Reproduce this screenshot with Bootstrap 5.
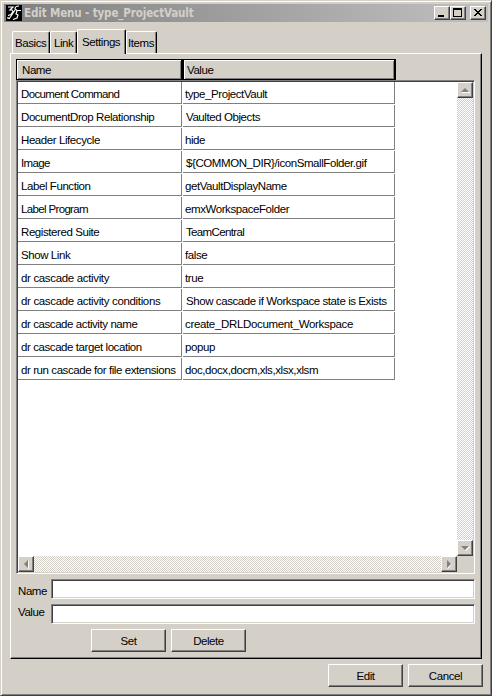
<!DOCTYPE html>
<html lang="en">
<head>
<meta charset="utf-8">
<title>Edit Menu</title>
<link href="https://cdn.jsdelivr.net/npm/bootstrap@5.3.0/dist/css/bootstrap.min.css" rel="stylesheet">
<style>
:root{--face:#d4d0c8;--mid:#808080;--dark:#404040}
body{margin:0;width:492px;height:696px;overflow:hidden;background:var(--face);font:11.5px/14px "Liberation Sans",Arial,sans-serif;color:#000}
.win{width:492px;height:696px;padding:3px 2px 0 2px;border:1px solid;border-color:var(--face) var(--dark) var(--dark) var(--face);box-shadow:inset 1px 1px #fff,inset -1px -1px var(--mid);background:var(--face)}
.titlebar{height:18px;margin-left:1px;margin-right:1px;padding:0 2px;background:linear-gradient(90deg,#808080,#c0c0c0)}
.caption-text{font:bold 11.5px/18px "DejaVu Sans Condensed","DejaVu Sans",sans-serif;font-stretch:condensed;color:var(--face);margin-left:2px;white-space:pre;letter-spacing:-.12px}
.face{background:var(--face);border:1px solid;border-color:#fff var(--dark) var(--dark) #fff;box-shadow:inset -1px -1px var(--mid);border-radius:0;padding:0;color:#000}
.cap{width:16px;height:14px}
.cap svg,.sb svg,.logo{display:block}
.tabs{height:25px;margin:6px 0 0 9px}
.tab{height:22px;border:1px solid;border-color:#fff #000 transparent #fff;border-bottom:0;border-radius:2px 2px 0 0;box-shadow:inset -1px 0 var(--mid);padding-top:4px;white-space:nowrap}
.tab.on{height:25px;padding-top:5px;background:var(--face);margin-bottom:-1px;z-index:1;position:relative}
.panel{margin:0 0 0 7px;width:472px;height:606px;border:1px solid;border-color:#fff #000 #000 #fff;box-shadow:inset -1px -1px var(--mid);padding:5px 0 0 5px}
.heads{height:21px}
.head{height:21px;border:1px solid #000;border-right-width:2px;box-shadow:inset 1px 1px #fff,inset -1px -1px var(--mid);padding:3px 0 0 4px}
.h1c{width:167px;padding-left:5px}.h2c{width:213px;padding-left:3px}
.list{width:459px;height:494px;border:1px solid;border-color:var(--mid) #fff #fff var(--mid);box-shadow:inset 1px 1px var(--dark),inset -1px -1px var(--face);background:#fff;padding:1px}
.rows{width:439px;height:475px;margin-top:-1px}
.line{height:23px}
.cell{height:22px;margin-top:1px;border-right:1px solid var(--mid);border-bottom:1px solid var(--mid);white-space:nowrap;padding:5px 0 0 3px}
.c1{width:164px}.c2{width:212px;margin-left:1px;padding-left:2px}
.c2.in{padding-left:3px}
.list .cell span,.head span,.tab span,.lbl,.face span{letter-spacing:-.42px}
.list .cell.tight span{letter-spacing:-.65px}
.list .cell.loose span{letter-spacing:-.34px}
.sb{background:repeating-conic-gradient(#fff 0 25%,var(--face) 0 50%) 0 0/2px 2px}
.vs{width:16px;height:474px}.hs{width:439px;height:16px}
.arrow{width:16px;height:16px}
.blank{background:var(--face)}
.entry{margin-top:5px}
.lbl{width:35px;padding-left:2px}
.field{width:424px;height:20px;border:1px solid;border-color:var(--mid) #fff #fff var(--mid);border-radius:0;padding:0;box-shadow:inset 1px 1px var(--dark),inset -1px -1px var(--face);background:#fff}
.push{width:75px;height:23px;font-size:11.5px;line-height:14px}
.set-row{margin:5px 0 0 75px;gap:5px}
.end-row{margin:5px 0 0 325px;gap:5px}
</style>
<script src="https://cdn.jsdelivr.net/npm/bootstrap@5.3.0/dist/js/bootstrap.bundle.min.js"></script>
</head>
<body>
<main class="win">
 <header class="titlebar d-flex align-items-center">
  <svg class="logo" width="16" height="16" viewBox="0 0 16 16"><path fill="#000" d="M0 0h16v16H0z"/><path d="M2 2h5L4 5h2l1 1.500-2 3-3 1M13 1c-3 0-4 1-4 3l2 1.500h4M9 5L3 14M11 6l-1 3 2 1-1 3-4 1.500M2 12v2" fill="none" stroke="#fff" stroke-width="1.2"/></svg>
  <span class="caption-text me-auto">Edit Menu - type_ProjectVault</span>
  <div class="d-flex">
   <div class="face cap"><svg width="14" height="12"><path d="M3 8h6v2H3z"/></svg></div>
   <div class="face cap"><svg width="14" height="12"><path d="M2 1h9v9H2zM3 3v6h7V3z" fill-rule="evenodd"/></svg></div>
   <div class="face cap ms-1"><svg width="14" height="12" shape-rendering="crispEdges"><path d="M3 2h2v1h1v1h2V3h1V2h2v1h-1v1H9v1H8v1h1v1h1v1h1v1H9V8H8V7H6v1H5v1H3V8h1V7h1V6h1V5H5V4H4V3H3z"/></svg></div>
  </div>
 </header>
 <nav class="tabs d-flex align-items-end">
  <div class="tab" style="width:38px;padding-left:2px"><span>Basics</span></div>
  <div class="tab" style="width:27px;padding-left:3px"><span>Link</span></div>
  <div class="tab on" style="width:49px;padding-left:4px"><span>Settings</span></div>
  <div class="tab" style="width:31px;padding-left:1px"><span>Items</span></div>
 </nav>
 <section class="panel">
  <div class="heads d-flex"><div class="head h1c"><span>Name</span></div><div class="head h2c"><span>Value</span></div></div>
  <div class="list">
   <div class="d-flex">
    <div class="rows">
     <div class="line d-flex"><div class="cell c1 tight"><span>Document Command</span></div><div class="cell c2"><span>type_ProjectVault</span></div></div>
     <div class="line d-flex"><div class="cell c1"><span>DocumentDrop Relationship</span></div><div class="cell c2 in"><span>Vaulted Objects</span></div></div>
     <div class="line d-flex"><div class="cell c1"><span>Header Lifecycle</span></div><div class="cell c2"><span>hide</span></div></div>
     <div class="line d-flex"><div class="cell c1 tight"><span>Image</span></div><div class="cell c2 in"><span>${COMMON_DIR}/iconSmallFolder.gif</span></div></div>
     <div class="line d-flex"><div class="cell c1"><span>Label Function</span></div><div class="cell c2"><span>getVaultDisplayName</span></div></div>
     <div class="line d-flex"><div class="cell c1 tight"><span>Label Program</span></div><div class="cell c2"><span>emxWorkspaceFolder</span></div></div>
     <div class="line d-flex"><div class="cell c1"><span>Registered Suite</span></div><div class="cell c2 in tight"><span>TeamCentral</span></div></div>
     <div class="line d-flex"><div class="cell c1"><span>Show Link</span></div><div class="cell c2"><span>false</span></div></div>
     <div class="line d-flex"><div class="cell c1 loose"><span>dr cascade activity</span></div><div class="cell c2"><span>true</span></div></div>
     <div class="line d-flex"><div class="cell c1 loose"><span>dr cascade activity conditions</span></div><div class="cell c2 in"><span>Show cascade if Workspace state is Exists</span></div></div>
     <div class="line d-flex"><div class="cell c1"><span>dr cascade activity name</span></div><div class="cell c2 loose"><span>create_DRLDocument_Workspace</span></div></div>
     <div class="line d-flex"><div class="cell c1"><span>dr cascade target location</span></div><div class="cell c2"><span>popup</span></div></div>
     <div class="line d-flex"><div class="cell c1"><span>dr run cascade for file extensions</span></div><div class="cell c2"><span>doc,docx,docm,xls,xlsx,xlsm</span></div></div>
    </div>
    <div class="sb vs d-flex flex-column justify-content-between">
     <div class="face arrow"><svg width="14" height="14"><path fill="#fff" d="M4 9h8v1H4z"/><path fill="#808080" d="M3 9l4-4 4 4z"/></svg></div>
     <div class="face arrow"><svg width="14" height="14"><path fill="#fff" d="M12 6L8 10 7 9l4-4z"/><path fill="#808080" d="M3 5h8L7 9z"/></svg></div>
    </div>
   </div>
   <div class="d-flex">
    <div class="sb hs d-flex justify-content-between">
     <div class="face arrow"><svg width="14" height="14"><path fill="#fff" d="M9 4h1v8H9z"/><path fill="#808080" d="M9 3v8L5 7z"/></svg></div>
     <div class="face arrow"><svg width="14" height="14"><path fill="#fff" d="M10 7L6 12l-1-1 4-4z"/><path fill="#808080" d="M5 3v8l4-4z"/></svg></div>
    </div>
    <div class="arrow blank"></div>
   </div>
  </div>
  <div class="entry d-flex align-items-center"><label class="lbl pt-1" for="n">Name</label><input id="n" class="form-control field"></div>
  <div class="entry d-flex align-items-center"><label class="lbl pb-1" for="v">Value</label><input id="v" class="form-control field"></div>
  <div class="set-row d-flex"><button class="btn face push"><span>Set</span></button><button class="btn face push"><span>Delete</span></button></div>
 </section>
 <footer class="end-row d-flex"><button class="btn face push"><span>Edit</span></button><button class="btn face push"><span>Cancel</span></button></footer>
</main>
</body>
</html>
